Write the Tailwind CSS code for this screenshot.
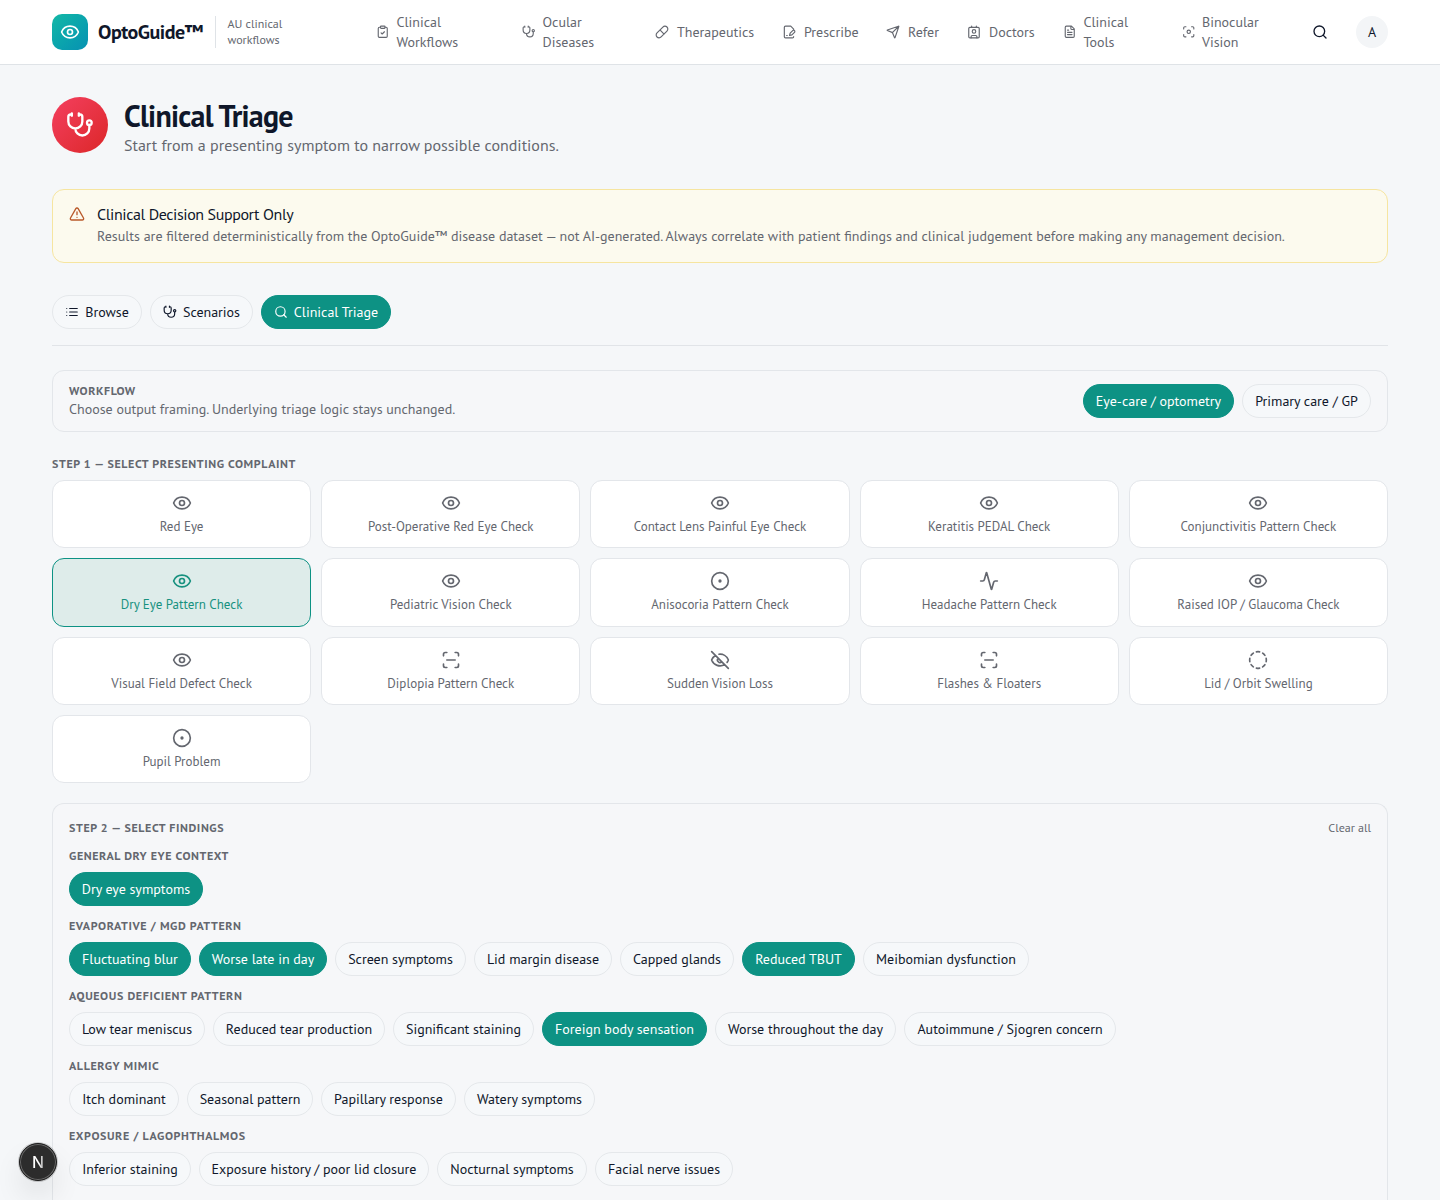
<!DOCTYPE html>
<html lang="en">
<head>
    <meta charset="UTF-8">
    <meta name="viewport" content="width=device-width, initial-scale=1.0">
    <title>OptoGuide - Clinical Triage</title>
    <script src="https://cdn.jsdelivr.net/npm/@tailwindcss/browser@4"></script>
</head>
<body class="h-[1200px] overflow-hidden bg-[#f5f7f9] font-['PT_Sans','Lato',sans-serif] text-sm text-[#0f172a] [stroke-linecap:round] [stroke-linejoin:round]">
    <!-- Icon sprite -->
    <svg class="hidden" xmlns="http://www.w3.org/2000/svg">
        <symbol id="eye" viewBox="0 0 24 24"><path d="M2.062 12.348a1 1 0 0 1 0-.696 10.75 10.75 0 0 1 19.876 0 1 1 0 0 1 0 .696 10.75 10.75 0 0 1-19.876 0"/><circle cx="12" cy="12" r="3"/></symbol>
        <symbol id="eye-off" viewBox="0 0 24 24"><path d="M10.733 5.076a10.744 10.744 0 0 1 11.205 6.575 1 1 0 0 1 0 .696 10.747 10.747 0 0 1-1.444 2.49M14.084 14.158a3 3 0 0 1-4.242-4.242M17.479 17.499a10.75 10.75 0 0 1-15.417-5.151 1 1 0 0 1 0-.696 10.75 10.75 0 0 1 4.446-5.143M2 2l20 20"/></symbol>
        <symbol id="clipboard" viewBox="0 0 24 24"><rect width="8" height="4" x="8" y="2" rx="1"/><path d="M16 4h2a2 2 0 0 1 2 2v14a2 2 0 0 1-2 2H6a2 2 0 0 1-2-2V6a2 2 0 0 1 2-2h2M9 14l2 2 4-4"/></symbol>
        <symbol id="stethoscope" viewBox="0 0 24 24"><path d="M11 2v2M5 2v2M5 3H4a2 2 0 0 0-2 2v4a6 6 0 0 0 12 0V5a2 2 0 0 0-2-2h-1M8 15a6 6 0 0 0 12 0v-3"/><circle cx="20" cy="10" r="2"/></symbol>
        <symbol id="pill" viewBox="0 0 24 24"><path d="m10.5 20.5 10-10a4.95 4.95 0 1 0-7-7l-10 10a4.95 4.95 0 1 0 7 7ZM8.5 8.5l7 7"/></symbol>
        <symbol id="prescribe" viewBox="0 0 24 24"><path d="M20 8V7l-5-5H6a2 2 0 0 0-2 2v16a2 2 0 0 0 2 2h12a2 2 0 0 0 2-2M8 18h1M18.4 9.6a2 2 0 1 1 3 3L17 17l-4 1 1-4Z"/></symbol>
        <symbol id="send" viewBox="0 0 24 24"><path d="M14.536 21.686a.5.5 0 0 0 .937-.024l6.5-19a.496.496 0 0 0-.635-.635l-19 6.5a.5.5 0 0 0-.024.937l7.93 3.18a2 2 0 0 1 1.112 1.11ZM21.854 2.147l-10.94 10.939"/></symbol>
        <symbol id="contact" viewBox="0 0 24 24"><path d="M16 2v2M8 2v2M7 22v-2a2 2 0 0 1 2-2h6a2 2 0 0 1 2 2v2"/><circle cx="12" cy="11" r="3"/><rect x="3" y="4" width="18" height="18" rx="2"/></symbol>
        <symbol id="file" viewBox="0 0 24 24"><path d="M15 2H6a2 2 0 0 0-2 2v16a2 2 0 0 0 2 2h12a2 2 0 0 0 2-2V7ZM14 2v4a2 2 0 0 0 2 2h4M10 9H8M16 13H8M16 17H8"/></symbol>
        <symbol id="focus" viewBox="0 0 24 24"><circle cx="12" cy="12" r="3"/><path d="M3 7V5a2 2 0 0 1 2-2h2M17 3h2a2 2 0 0 1 2 2v2M21 17v2a2 2 0 0 1-2 2h-2M7 21H5a2 2 0 0 1-2-2v-2"/></symbol>
        <symbol id="scan" viewBox="0 0 24 24"><path d="M3 7V5a2 2 0 0 1 2-2h2M17 3h2a2 2 0 0 1 2 2v2M21 17v2a2 2 0 0 1-2 2h-2M7 21H5a2 2 0 0 1-2-2v-2M7 12h10"/></symbol>
        <symbol id="search" viewBox="0 0 24 24"><circle cx="11" cy="11" r="8"/><path d="m21 21-4.3-4.3"/></symbol>
        <symbol id="warning" viewBox="0 0 24 24"><path d="m21.73 18-8-14a2 2 0 0 0-3.48 0l-8 14A2 2 0 0 0 4 21h16a2 2 0 0 0 1.73-3M12 9v4M12 17h.01"/></symbol>
        <symbol id="list" viewBox="0 0 24 24"><path d="M3 6h.01M3 12h.01M3 18h.01M8 6h13M8 12h13M8 18h13"/></symbol>
        <symbol id="circle-dot" viewBox="0 0 24 24"><circle cx="12" cy="12" r="10"/><circle cx="12" cy="12" r="1"/></symbol>
        <symbol id="activity" viewBox="0 0 24 24"><path d="M22 12h-2.48a2 2 0 0 0-1.93 1.46l-2.35 8.36a.25.25 0 0 1-.48 0L9.24 2.18a.25.25 0 0 0-.48 0l-2.35 8.36A2 2 0 0 1 4.49 12H2"/></symbol>
        <symbol id="circle-dashed" viewBox="0 0 24 24"><path d="M10.1 2.182a10 10 0 0 1 3.8 0M13.9 21.818a10 10 0 0 1-3.8 0M17.609 3.721a10 10 0 0 1 2.69 2.7M2.182 13.9a10 10 0 0 1 0-3.8M20.279 17.609a10 10 0 0 1-2.7 2.69M21.818 10.1a10 10 0 0 1 0 3.8M3.721 6.391a10 10 0 0 1 2.7-2.69M6.391 20.279a10 10 0 0 1-2.69-2.7"/></symbol>
    </svg>

    <header class="h-[65px] border-b border-[#dfe3e7] bg-white">
        <div class="flex h-16 items-center px-[52px]">
            <a href="#" class="flex w-[324px] shrink-0 items-center">
                <span class="flex size-9 items-center justify-center rounded-[10px] bg-linear-to-br from-[#14b8a6] to-[#0891b2]">
                    <svg class="size-5 fill-none stroke-white stroke-2"><use href="#eye"/></svg>
                </span>
                <span class="ml-2.5 w-[107px] text-xl font-bold tracking-[-0.5px] whitespace-nowrap">OptoGuide™</span>
                <span class="ml-2.5 w-20 border-l border-[#dfe3e7] pl-[11.5px] text-xs leading-4 text-[#64676f]">AU clinical workflows</span>
            </a>
            <nav id="nav" class="flex items-center leading-5 text-[#64676f]"></nav>
            <button class="flex size-4 shrink-0 items-center justify-center"><svg class="size-4 fill-none stroke-current stroke-2"><use href="#search"/></svg></button>
            <span class="ml-7 flex size-8 shrink-0 items-center justify-center rounded-full bg-[#f3f5f7]">A</span>
        </div>
    </header>

    <main class="px-[52px] pt-8">
        <div class="flex h-14 gap-4">
            <span class="flex size-14 items-center justify-center rounded-full bg-linear-to-br from-[#f43f5e] to-[#dc2626]">
                <svg class="size-7 fill-none stroke-white stroke-2"><use href="#stethoscope"/></svg>
            </span>
            <div>
                <h1 class="mt-px text-[30px] leading-9 font-bold tracking-[-0.75px]">Clinical Triage</h1>
                <p class="-mt-px text-base leading-6 text-[#64676f]">Start from a presenting symptom to narrow possible conditions.</p>
            </div>
        </div>

        <section class="mt-9 flex h-[74px] gap-3 rounded-xl border border-[#f6e5a0] bg-[#fcfaee] px-4 pt-3">
            <svg class="mt-1 size-4 shrink-0 fill-none stroke-[#b9592a] stroke-2"><use href="#warning"/></svg>
            <div>
                <h2 class="text-base leading-6 tracking-tight">Clinical Decision Support Only</h2>
                <p class="leading-5 text-[#64676f]">Results are filtered deterministically from the OptoGuide™ disease dataset — not AI-generated. Always correlate with patient findings and clinical judgement before making any management decision.</p>
            </div>
        </section>

        <div id="tabs" class="mt-8 flex gap-2 border-b border-[#e1e4e8] pb-4"></div>

        <section class="mt-6 flex h-[62px] items-center justify-between rounded-xl border border-[#e3e6ea] bg-[#f6f7f9] px-4">
            <div class="text-[#64676f]">
                <h3 class="text-xs leading-4 font-bold tracking-[0.6px]">WORKFLOW</h3>
                <p class="leading-5">Choose output framing. Underlying triage logic stays unchanged.</p>
            </div>
            <div id="framing" class="flex gap-2"></div>
        </section>

        <h3 class="mt-6 text-xs leading-4 font-bold tracking-[0.6px] text-[#64676f]">STEP 1 — SELECT PRESENTING COMPLAINT</h3>
        <div id="complaints" class="mt-2 grid grid-cols-5 gap-2.5"></div>

        <section class="mt-5 h-[397px] rounded-t-xl border border-b-0 border-[#e3e6ea] bg-[#f6f7f9] px-4 pt-4">
            <div class="flex justify-between text-xs leading-4 text-[#64676f]">
                <h3 class="font-bold tracking-[0.6px]">STEP 2 — SELECT FINDINGS</h3>
                <button>Clear all</button>
            </div>
            <div id="findings"></div>
        </section>
    </main>

    <div class="fixed top-[1143px] left-[19px] flex size-[38px] items-center justify-center rounded-full border border-[#1c1c1c] bg-[#2c2c2c] shadow-[0_0_0_1px_#17171733,0_16px_32px_-8px_#0000003d] ring-1 ring-[#6a6a6a] ring-inset">
        <span class="bg-linear-to-r from-white from-60% to-white/50 bg-clip-text font-['Inter',sans-serif] text-base leading-4 font-medium text-transparent">N</span>
    </div>

    <script>
        const icon = (id, cls) => `<svg class="${cls} shrink-0 fill-none stroke-current stroke-2"><use href="#${id}"/></svg>`;

        // icon, label, slot width, wraps onto two lines
        const nav = [
            ['clipboard', 'Clinical<br>Workflows', 146, true],
            ['stethoscope', 'Ocular<br>Diseases', 133, true],
            ['pill', 'Therapeutics', 127],
            ['prescribe', 'Prescribe', 104],
            ['send', 'Refer', 81],
            ['contact', 'Doctors', 96],
            ['file', 'Clinical<br>Tools', 118.5, true],
            ['focus', 'Binocular<br>Vision', 130.5, true],
        ];
        document.getElementById('nav').innerHTML = nav.map(([id, label, w, wraps]) => `
            <a href="#" class="flex shrink-0 items-center ${wraps ? 'gap-[7px]' : 'gap-2'}" style="width:${w}px">
                ${icon(id, wraps ? 'size-[13.5px]' : 'size-3.5')}<span>${label}</span>
            </a>`).join('');

        // label, width, selected, icon
        const pill = ([label, w, on, id]) => `
            <button class="flex h-[34px] shrink-0 items-center justify-center gap-1.5 rounded-full border whitespace-nowrap ${on ? 'border-[#0d9284] bg-[#0d9284] text-white' : 'border-[#e5e8eb] bg-[#f6f8fa]'}" style="width:${w}px">
                ${id ? icon(id, 'size-3.5') : ''}<span>${label}</span>
            </button>`;

        document.getElementById('tabs').innerHTML = [
            ['Browse', 90, false, 'list'],
            ['Scenarios', 103, false, 'stethoscope'],
            ['Clinical Triage', 130, true, 'search'],
        ].map(pill).join('');

        document.getElementById('framing').innerHTML = [
            ['Eye-care / optometry', 151, true],
            ['Primary care / GP', 129],
        ].map(pill).join('');

        const complaints = [
            ['eye', 'Red Eye'],
            ['eye', 'Post-Operative Red Eye Check'],
            ['eye', 'Contact Lens Painful Eye Check'],
            ['eye', 'Keratitis PEDAL Check'],
            ['eye', 'Conjunctivitis Pattern Check'],
            ['eye', 'Dry Eye Pattern Check', true],
            ['eye', 'Pediatric Vision Check'],
            ['circle-dot', 'Anisocoria Pattern Check'],
            ['activity', 'Headache Pattern Check'],
            ['eye', 'Raised IOP / Glaucoma Check'],
            ['eye', 'Visual Field Defect Check'],
            ['scan', 'Diplopia Pattern Check'],
            ['eye-off', 'Sudden Vision Loss'],
            ['scan', 'Flashes &amp; Floaters'],
            ['circle-dashed', 'Lid / Orbit Swelling'],
            ['circle-dot', 'Pupil Problem'],
        ];
        document.getElementById('complaints').innerHTML = complaints.map(([id, label, on]) => `
            <button class="flex h-[68.25px] flex-col items-center gap-1.5 rounded-xl border pt-3 text-[13px] leading-4 ${on ? 'border-[#0d9284] bg-[#deecea] text-[#17917f]' : 'border-[#e3e6ea] bg-white text-[#64676f]'}">
                ${icon(id, 'size-5')}<span>${label}</span>
            </button>`).join('');

        const findings = [
            ['GENERAL DRY EYE CONTEXT', [['Dry eye symptoms', 134, true]]],
            ['EVAPORATIVE / MGD PATTERN', [
                ['Fluctuating blur', 122, true], ['Worse late in day', 128, true], ['Screen symptoms', 131],
                ['Lid margin disease', 138], ['Capped glands', 114], ['Reduced TBUT', 113, true], ['Meibomian dysfunction', 166],
            ]],
            ['AQUEOUS DEFICIENT PATTERN', [
                ['Low tear meniscus', 136], ['Reduced tear production', 172], ['Significant staining', 141],
                ['Foreign body sensation', 165, true], ['Worse throughout the day', 181], ['Autoimmune / Sjogren concern', 212],
            ]],
            ['ALLERGY MIMIC', [['Itch dominant', 110], ['Seasonal pattern', 126], ['Papillary response', 135], ['Watery symptoms', 131]]],
            ['EXPOSURE / LAGOPHTHALMOS', [
                ['Inferior staining', 122], ['Exposure history / poor lid closure', 230], ['Nocturnal symptoms', 150], ['Facial nerve issues', 138],
            ]],
        ];
        document.getElementById('findings').innerHTML = findings.map(([title, items]) => `
            <h4 class="mt-3 text-xs leading-4 font-bold tracking-[0.6px] text-[#64676f]">${title}</h4>
            <div class="mt-2 flex gap-2">${items.map(pill).join('')}</div>`).join('');
    </script>
</body>
</html>
